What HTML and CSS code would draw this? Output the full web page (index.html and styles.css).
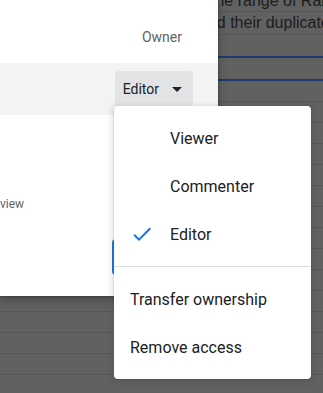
FILE: index.html
```html
<!DOCTYPE html>
<html lang="en">
<head>
<meta charset="utf-8">
<title>Share</title>
<link rel="stylesheet" href="styles.css">
</head>
<body>
<div class="page">
  <div class="sheet">
    <div class="row r-first"><span class="cell cell-a">the range of Random</span></div>
    <div class="row r-second"><span class="cell cell-b">and their duplicates</span></div>
    <div class="row r-sel"></div>
    <div class="row r-sel"></div>
    <div class="row"></div>
    <div class="row"></div>
    <div class="row"></div>
    <div class="row"></div>
    <div class="row"></div>
    <div class="row"></div>
    <div class="row"></div>
    <div class="row"></div>
    <div class="row"></div>
    <div class="row"></div>
    <div class="row"></div>
    <div class="row"></div>
    <div class="row"></div>
    <div class="row"></div>
  </div>

  <div class="dialog">
    <div class="owner-row"><span class="owner">Owner</span></div>
    <div class="editor-row">
      <button class="role-btn" type="button">
        <span>Editor</span>
        <svg class="drop" viewBox="0 0 24 24" width="24" height="24" aria-hidden="true"><path d="M7 10l5 5 5-5z"/></svg>
      </button>
    </div>
    <div class="link-info"><span class="link-text">view</span></div>
    <div class="actions"><button class="done" type="button">Done</button></div>
  </div>

  <div class="menu" role="menu">
    <div class="menu-group">
      <div class="item"><span class="check-slot"></span><span>Viewer</span></div>
      <div class="item"><span class="check-slot"></span><span>Commenter</span></div>
      <div class="item"><span class="check-slot"><svg viewBox="0 0 24 24" width="24" height="24" aria-hidden="true"><path d="M9 16.17L4.83 12l-1.42 1.41L9 19 21 7l-1.41-1.41z"/></svg></span><span>Editor</span></div>
    </div>
    <div class="divider"></div>
    <div class="menu-group">
      <div class="item plain">Transfer ownership</div>
      <div class="item plain">Remove access</div>
    </div>
  </div>
</div>
</body>
</html>
```

FILE: styles.css
```css
* { box-sizing: border-box; }

html, body {
  margin: 0;
  padding: 0;
  width: 323px;
  height: 393px;
  overflow: hidden;
  background: #616161;
}

.page {
  position: relative;
  width: 323px;
  height: 393px;
  display: grid;
  grid-template: 1fr / 1fr;
  overflow: hidden;
}

.sheet {
  grid-area: 1 / 1;
  margin-top: -10px;
  display: flex;
  flex-direction: column;
  font-family: "Liberation Sans", Arial, sans-serif;
  font-size: 16px;
  color: #1c1c1c;
}

.row {
  height: 21px;
  flex: none;
  border-bottom: 1px solid #575757;
  display: flex;
  align-items: center;
  white-space: nowrap;
}

.r-first { height: 22px; }
.r-second { height: 23px; }
.r-sel {
  height: 23px;
  border-bottom: 2px solid #1c3c6e;
}

.cell { display: block; line-height: 22px; }
.cell-a { padding-left: 211px; }
.cell-b { padding-left: 199px; }

.dialog {
  grid-area: 1 / 1;
  align-self: start;
  justify-self: start;
  width: 218px;
  height: 296px;
  padding-top: 11px;
  background: #fff;
  border-radius: 0 0 8px 0;
  box-shadow: 0 4px 8px 3px rgba(0,0,0,.15), 0 1px 3px rgba(0,0,0,.3);
  display: flex;
  flex-direction: column;
  font-family: Roboto, "Noto Sans", sans-serif;
}

.owner-row {
  height: 52px;
  display: flex;
  align-items: center;
  justify-content: flex-end;
  padding-right: 36px;
}

.owner {
  font-size: 14px;
  color: #5f6368;
}

.editor-row {
  height: 52px;
  background: #f1f3f4;
  display: flex;
  align-items: center;
  justify-content: flex-end;
  padding-right: 25px;
}

.role-btn {
  height: 36px;
  display: flex;
  align-items: center;
  gap: 6px;
  padding: 0 4px 0 8px;
  border: none;
  border-radius: 4px;
  background: #e1e3e4;
  font-family: Roboto, "Noto Sans", sans-serif;
  font-size: 14px;
  font-weight: 400;
  color: #202124;
}

.drop { fill: #202124; display: block; }

.link-info {
  padding-top: 81px;
  height: 97px;
  white-space: nowrap;
}

.link-text {
  display: block;
  font-size: 12px;
  line-height: 16px;
  color: #5f6368;
}

.actions {
  margin-top: 27px;
  display: flex;
  justify-content: flex-end;
  padding-right: 22px;
}

.done {
  height: 36px;
  width: 84px;
  border: none;
  border-radius: 4px;
  background: #1a73e8;
  color: #fff;
  font-family: Roboto, "Noto Sans", sans-serif;
  font-size: 14px;
  font-weight: 500;
}

.menu {
  position: absolute;
  left: 114px;
  top: 106px;
  width: 197px;
  padding: 8px 0;
  background: #fff;
  border-radius: 4px;
  box-shadow: 0 2px 6px 2px rgba(60,64,67,.15), 0 1px 2px rgba(60,64,67,.3);
  font-family: Roboto, "Noto Sans", sans-serif;
  font-size: 16px;
  color: #202124;
}

.item {
  height: 48px;
  display: flex;
  align-items: center;
  gap: 16px;
  padding-left: 16px;
  white-space: nowrap;
}

.check-slot {
  width: 24px;
  height: 24px;
  display: block;
  flex: none;
}

.check-slot svg { display: block; fill: #1a73e8; }

.divider {
  height: 1px;
  margin: 8px 0;
  background: #dadce0;
}
```
